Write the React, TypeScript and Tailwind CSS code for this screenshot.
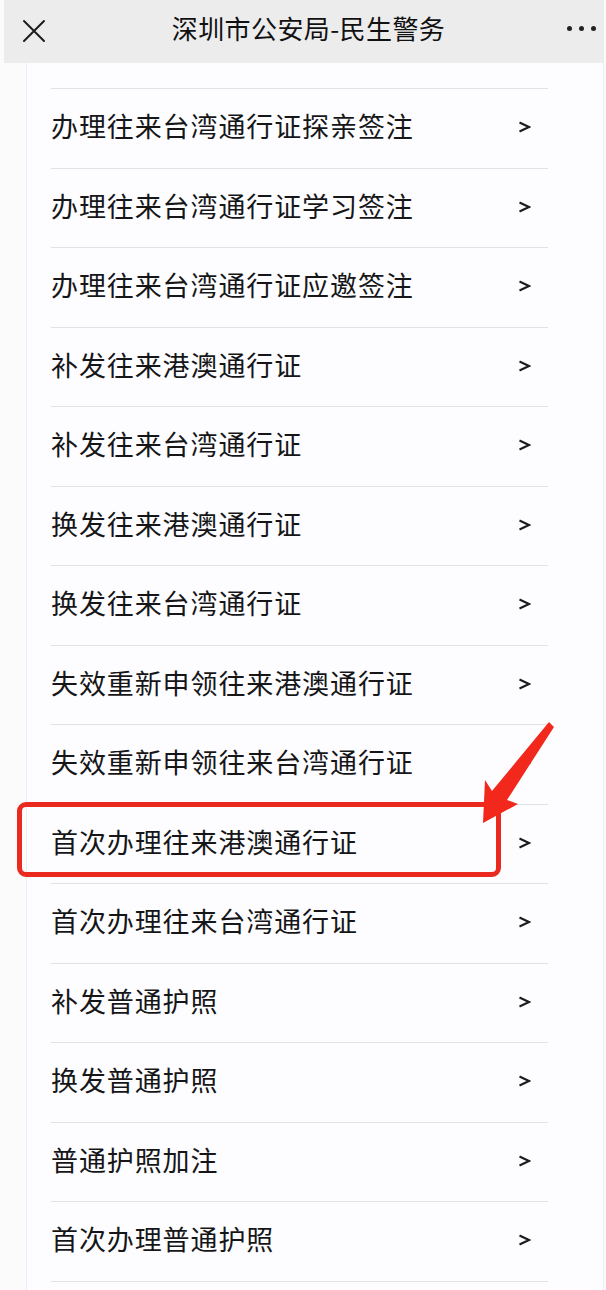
const items = [
  '办理往来台湾通行证探亲签注',
  '办理往来台湾通行证学习签注',
  '办理往来台湾通行证应邀签注',
  '补发往来港澳通行证',
  '补发往来台湾通行证',
  '换发往来港澳通行证',
  '换发往来台湾通行证',
  '失效重新申领往来港澳通行证',
  '失效重新申领往来台湾通行证',
  '首次办理往来港澳通行证',
  '首次办理往来台湾通行证',
  '补发普通护照',
  '换发普通护照',
  '普通护照加注',
  '首次办理普通护照',
];

const font = { fontFamily: '"Noto Sans CJK SC", "Noto Sans", sans-serif' };

export default function App() {
  return (
    <div className="relative w-[606px] h-[1290px] overflow-hidden bg-[#fbfbfc]" style={font}>
      <header className="ml-[4px] w-[600px] h-[63px] bg-[#ececed] flex items-center justify-between pl-[18px] pr-[8px]">
        <svg width="24" height="24" viewBox="0 0 24 24" className="text-[#1c1c1c] -mt-[2px]">
          <path d="M2 2 L22 22 M22 2 L2 22" stroke="currentColor" strokeWidth="2" strokeLinecap="round" />
        </svg>
        <h1 className="text-[26px] tracking-[0.4px] text-[#111] leading-none -mt-[8px] ml-[4px]">深圳市公安局-民生警务</h1>
        <div className="flex gap-[7px] items-center -mt-[6px]">
          <span className="w-[5px] h-[5px] rounded-full bg-[#222]" />
          <span className="w-[5px] h-[5px] rounded-full bg-[#222]" />
          <span className="w-[5px] h-[5px] rounded-full bg-[#222]" />
        </div>
      </header>

      <div className="ml-[26px] w-[578px] h-[1227px] bg-[#fdfdff] border-x border-[#eceef2]">
        <div className="h-[25px]" />
        <ul className="pl-[24px] pr-[55px]">
          {items.map((t) => (
            <li
              key={t}
              className="h-[79.5px] border-t-[1.5px] border-[#e0e2e7] flex items-center justify-between"
            >
              <span className="text-[27px] tracking-[0.9px] text-[#161618] leading-none -mt-[5px]">{t}</span>
              <svg width="13" height="12" viewBox="0 0 13 12" className="mr-[17px] -mt-[2px]">
                <path d="M1.5 1.5 L11 6 L1.5 10.5" fill="none" stroke="#1b1b1d" strokeWidth="2" />
              </svg>
            </li>
          ))}
          <li className="border-t-[1.5px] border-[#e0e2e7]" />
        </ul>
      </div>

      <div className="absolute left-[17px] top-[802px] w-[484px] h-[75px] rounded-[9px] border-[5px] border-[#ea2a1f]" />
      <svg className="absolute left-0 top-0" width="606" height="1290" viewBox="0 0 606 1290">
        <polygon
          points="549,722 554,727 507,800 518,804 483,823 485,780 492,791"
          fill="#f2281c"
        />
      </svg>
    </div>
  );
}
